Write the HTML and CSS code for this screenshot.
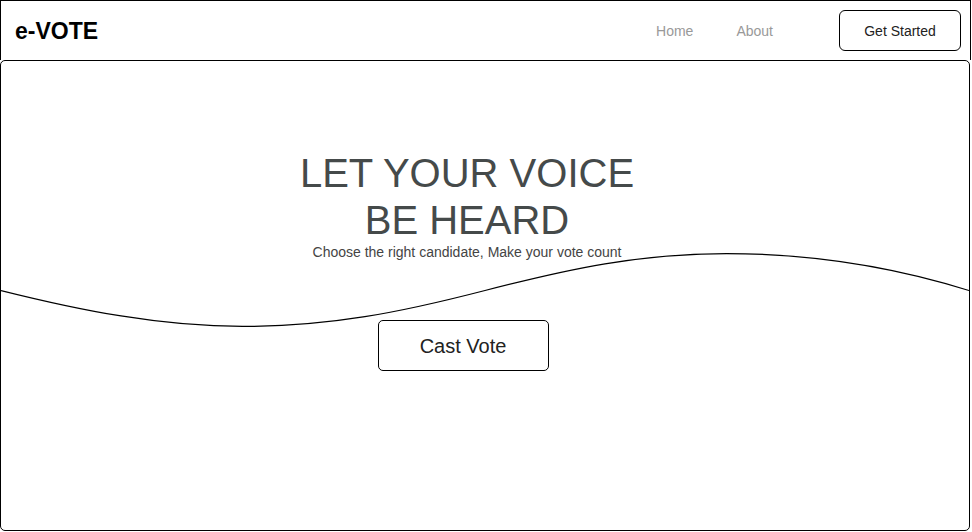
FILE: index.html
```html
<!DOCTYPE html>
<html lang="en">
<head>
<meta charset="utf-8">
<title>e-VOTE</title>
<link rel="stylesheet" href="styles.css">
</head>
<body>
<header class="nav">
  <div class="logo">e-VOTE</div>
  <ul class="links">
    <li><a href="#">Home</a></li>
    <li><a href="#">About</a></li>
  </ul>
  <button class="btn-start">Get Started</button>
</header>
<main class="hero">
  <svg class="wave" viewBox="0 0 970 470" preserveAspectRatio="none" aria-hidden="true">
    <path d="M0,230 C80,250 160,266 242,266 C330,266 400,252 485,230 C570,208 640,193 727,193 C810,193 890,205 970,230" fill="none" stroke="#000" stroke-width="1.2"/>
  </svg>
  <div class="content">
    <h1 class="title">LET YOUR VOICE<br>BE HEARD</h1>
    <p class="sub">Choose the right candidate, Make your vote count</p>
    <button class="btn-cast">Cast Vote</button>
  </div>
</main>
</body>
</html>
```

FILE: styles.css
```css
* { box-sizing: border-box; }
html, body { margin: 0; padding: 0; background: #fff; }
body { font-family: "Liberation Sans", Arial, sans-serif; width: 972px; height: 532px; }

.nav {
  display: flex;
  align-items: center;
  width: 971px;
  height: 60px;
  border: 1px solid #000;
  border-bottom: none;
}
.logo {
  font-size: 23px;
  font-weight: bold;
  color: #000;
  padding-left: 14px;
  padding-top: 1px;
}
.links {
  list-style: none;
  display: flex;
  gap: 43px;
  margin: 0 66px 0 auto;
  padding: 0;
}
.links a {
  color: #999;
  font-size: 14px;
  text-decoration: none;
}
.btn-start {
  width: 122px;
  height: 41px;
  margin-right: 9px;
  border: 1px solid #000;
  border-radius: 6px;
  background: #fff;
  color: #222;
  font-family: inherit;
  font-size: 14px;
  padding: 0;
}

.hero {
  position: relative;
  width: 970px;
  height: 471px;
  border: 1px solid #000;
  border-radius: 5px;
  overflow: hidden;
}
.wave {
  position: absolute;
  left: 0;
  top: 0;
  width: 968px;
  height: 469px;
}
.content {
  position: relative;
  display: flex;
  flex-direction: column;
  align-items: center;
  padding: 89px 36px 0 0;
}
.title {
  margin: 0;
  font-size: 40px;
  font-weight: normal;
  line-height: 47px;
  text-align: center;
  color: #454a4a;
}
.sub {
  margin: 0;
  font-size: 14px;
  line-height: 17px;
  color: #444;
}
.btn-cast {
  margin: 59px 8px 0 0;
  width: 171px;
  height: 51px;
  border: 1px solid #000;
  border-radius: 5px;
  background: #fff;
  color: #222;
  font-family: inherit;
  font-size: 20px;
  padding: 1px 0 0 0;
}
```
